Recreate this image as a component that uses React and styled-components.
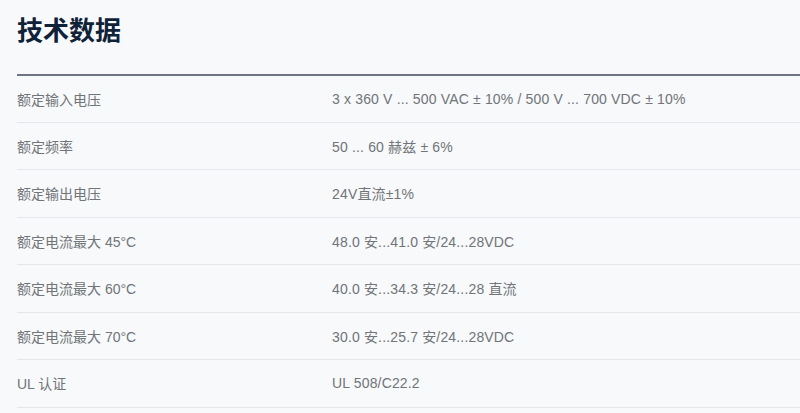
import React from "react";
import styled, { createGlobalStyle } from "styled-components";

const GlobalStyle = createGlobalStyle`
  body {
    margin: 0;
    background: #f7f9fb;
    font-family: "Liberation Sans", Arial, "Noto Sans CJK SC", sans-serif;
  }
`;

const specs = [
  ["额定输入电压", "3 x 360 V ... 500 VAC ± 10% / 500 V ... 700 VDC ± 10%"],
  ["额定频率", "50 ... 60 赫兹 ± 6%"],
  ["额定输出电压", "24V直流±1%"],
  ["额定电流最大 45°C", "48.0 安...41.0 安/24...28VDC"],
  ["额定电流最大 60°C", "40.0 安...34.3 安/24...28 直流"],
  ["额定电流最大 70°C", "30.0 安...25.7 安/24...28VDC"],
  ["UL 认证", "UL 508/C22.2"],
];

const App = () => {
  return (
    <>
      <GlobalStyle />
      <Section>
        <Title>技术数据</Title>
        <Table>
          {specs.map(([label, value]) => (
            <Row key={label}>
              <Label>{label}</Label>
              <Value>{value}</Value>
            </Row>
          ))}
        </Table>
      </Section>
    </>
  );
};

export default App;

const Section = styled.section`
  padding: 14px 0 0 17px;
`;

const Title = styled.h2`
  margin: 0;
  padding-bottom: 26px;
  font-size: 26px;
  line-height: 34px;
  font-weight: 700;
  color: #102238;
  border-bottom: 2px solid #6d7580;
`;

const Table = styled.div`
  display: flex;
  flex-direction: column;
`;

const Row = styled.div`
  display: grid;
  grid-template-columns: 315px 1fr;
  align-items: center;
  height: 46.5px;
  border-bottom: 1px solid #e3e6ea;
  font-size: 14px;
  color: #717478;

  &:first-child {
    height: 45.5px;
  }
`;

const Label = styled.span``;

const Value = styled.span`
  letter-spacing: 0.16px;
`;
